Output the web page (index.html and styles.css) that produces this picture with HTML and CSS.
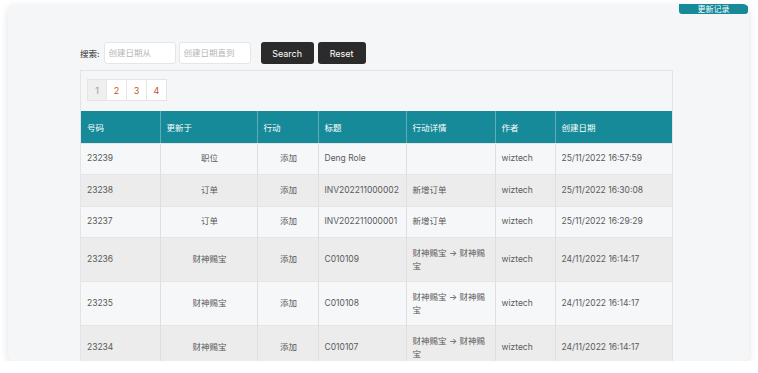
FILE: index.html
```html
<!DOCTYPE html>
<html lang="zh">
<head>
    <meta charset="UTF-8">
    <meta name="viewport" content="width=device-width, initial-scale=1.0">
    <title>更新记录</title>
    <link rel="stylesheet" href="styles.css">
</head>
<body>
    <div class="frame">
        <div class="card">
            <button class="top-btn">更新记录</button>
            <form class="search-bar">
                <label>搜索:</label>
                <input type="text" placeholder="创建日期从">
                <input type="text" placeholder="创建日期直到">
                <button type="button" class="btn btn-search">Search</button>
                <button type="button" class="btn">Reset</button>
            </form>
            <div class="table-box">
                <div class="pager">
                    <span class="page active">1</span>
                    <span class="page">2</span>
                    <span class="page">3</span>
                    <span class="page">4</span>
                </div>
                <table class="log-table">
                    <thead>
                        <tr>
                            <th class="c-no">号码</th>
                            <th class="c-type">更新于</th>
                            <th class="c-act">行动</th>
                            <th class="c-title">标题</th>
                            <th class="c-detail">行动详情</th>
                            <th class="c-author">作者</th>
                            <th>创建日期</th>
                        </tr>
                    </thead>
                    <tbody>
                        <tr>
                            <td>23239</td><td class="center">职位</td><td class="center">添加</td>
                            <td>Deng Role</td><td></td><td>wiztech</td><td>25/11/2022 16:57:59</td>
                        </tr>
                        <tr>
                            <td>23238</td><td class="center">订单</td><td class="center">添加</td>
                            <td>INV202211000002</td><td>新增订单</td><td>wiztech</td><td>25/11/2022 16:30:08</td>
                        </tr>
                        <tr>
                            <td>23237</td><td class="center">订单</td><td class="center">添加</td>
                            <td>INV202211000001</td><td>新增订单</td><td>wiztech</td><td>25/11/2022 16:29:29</td>
                        </tr>
                        <tr class="tall">
                            <td>23236</td><td class="center">财神赐宝</td><td class="center">添加</td>
                            <td>C010109</td><td>财神赐宝 → 财神赐宝</td><td>wiztech</td><td>24/11/2022 16:14:17</td>
                        </tr>
                        <tr class="tall">
                            <td>23235</td><td class="center">财神赐宝</td><td class="center">添加</td>
                            <td>C010108</td><td>财神赐宝 → 财神赐宝</td><td>wiztech</td><td>24/11/2022 16:14:17</td>
                        </tr>
                        <tr class="tall">
                            <td>23234</td><td class="center">财神赐宝</td><td class="center">添加</td>
                            <td>C010107</td><td>财神赐宝 → 财神赐宝</td><td>wiztech</td><td>24/11/2022 16:14:17</td>
                        </tr>
                    </tbody>
                </table>
            </div>
        </div>
    </div>
</body>
</html>
```

FILE: styles.css
```css
body {
    margin: 0;
    background: #ffffff;
    font-family: Inter, "Noto Sans CJK SC", sans-serif;
    font-size: 8.5px;
    color: #5a5a5a;
}

.frame {
    padding: 4px 9px 0 8px;
}

.card {
    position: relative;
    height: 357px;
    overflow: hidden;
    background: #f5f6f8;
    border-radius: 6px;
    box-shadow: 0 3px 8px rgba(0, 0, 0, 0.12);
    padding: 38px 0 0 72px;
    box-sizing: border-box;
}

.top-btn {
    position: absolute;
    top: -4px;
    right: 1px;
    width: 69px;
    height: 14px;
    border: none;
    border-radius: 0 0 3px 3px;
    background: #168a99;
    color: #fff;
    font-family: inherit;
    font-size: 8px;
    line-height: 8px;
    padding: 3px 0 0;
}

.search-bar {
    display: flex;
    align-items: center;
    height: 22px;
    margin-bottom: 6px;
}

.search-bar label {
    color: #555;
    font-weight: 500;
    font-size: 8.5px;
    white-space: nowrap;
    flex-shrink: 0;
    margin-right: 4px;
}

.search-bar input {
    width: 72px;
    height: 22px;
    box-sizing: border-box;
    border: 1px solid #e6e6e6;
    border-radius: 3px;
    background: #fff;
    padding: 0 4px;
    margin-right: 3px;
    font-family: inherit;
    font-size: 8.5px;
}

.search-bar input::placeholder {
    color: #b5b5b5;
}

.btn {
    height: 22px;
    padding: 0;
    width: 48px;
    border: none;
    border-radius: 3px;
    background: #2b2b2b;
    color: #fff;
    font-family: inherit;
    font-size: 9px;
    margin-right: 4px;
}

.btn-search {
    margin-left: 7px;
    width: 53px;
}

.table-box {
    width: 593px;
    border: 1px solid #e2e4e7;
    box-sizing: border-box;
    height: 400px;
}

.pager {
    display: flex;
    margin: 8px 0 10px 6px;
}

.page {
    width: 20px;
    height: 22px;
    box-sizing: border-box;
    display: flex;
    align-items: center;
    justify-content: center;
    background: #fff;
    border: 1px solid #e4e4e4;
    border-left: none;
    color: #c5532b;
    font-size: 9px;
}

.page.active {
    border-left: 1px solid #e4e4e4;
    background: #efefef;
    color: #999;
}

.log-table {
    width: 100%;
    border-collapse: collapse;
    table-layout: fixed;
}

.log-table th,
.log-table td {
    box-sizing: border-box;
    padding: 0 4px 0 6px;
}

.log-table th {
    height: 32px;
    background: #168a99;
    color: #fff;
    font-weight: normal;
    text-align: left;
    border-left: 1px solid rgba(255, 255, 255, 0.3);
}

.log-table th:first-child {
    border-left: none;
}

.c-no { width: 79px; }
.c-type { width: 97px; }
.c-act { width: 61px; }
.c-title { width: 88px; }
.c-detail { width: 89px; }
.c-author { width: 60px; }

.log-table td {
    height: 31.5px;
    border-left: 1px solid #dfdfdf;
    border-top: 1px solid #e6e6e6;
    line-height: 13px;
}

.log-table td:first-child {
    border-left: none;
}

.log-table tbody tr:nth-child(odd) {
    background: #f6f7f9;
}

.log-table tbody tr:nth-child(even) {
    background: #ececec;
}

.log-table tr.tall td {
    height: 44px;
}

.center {
    text-align: center;
}
```
